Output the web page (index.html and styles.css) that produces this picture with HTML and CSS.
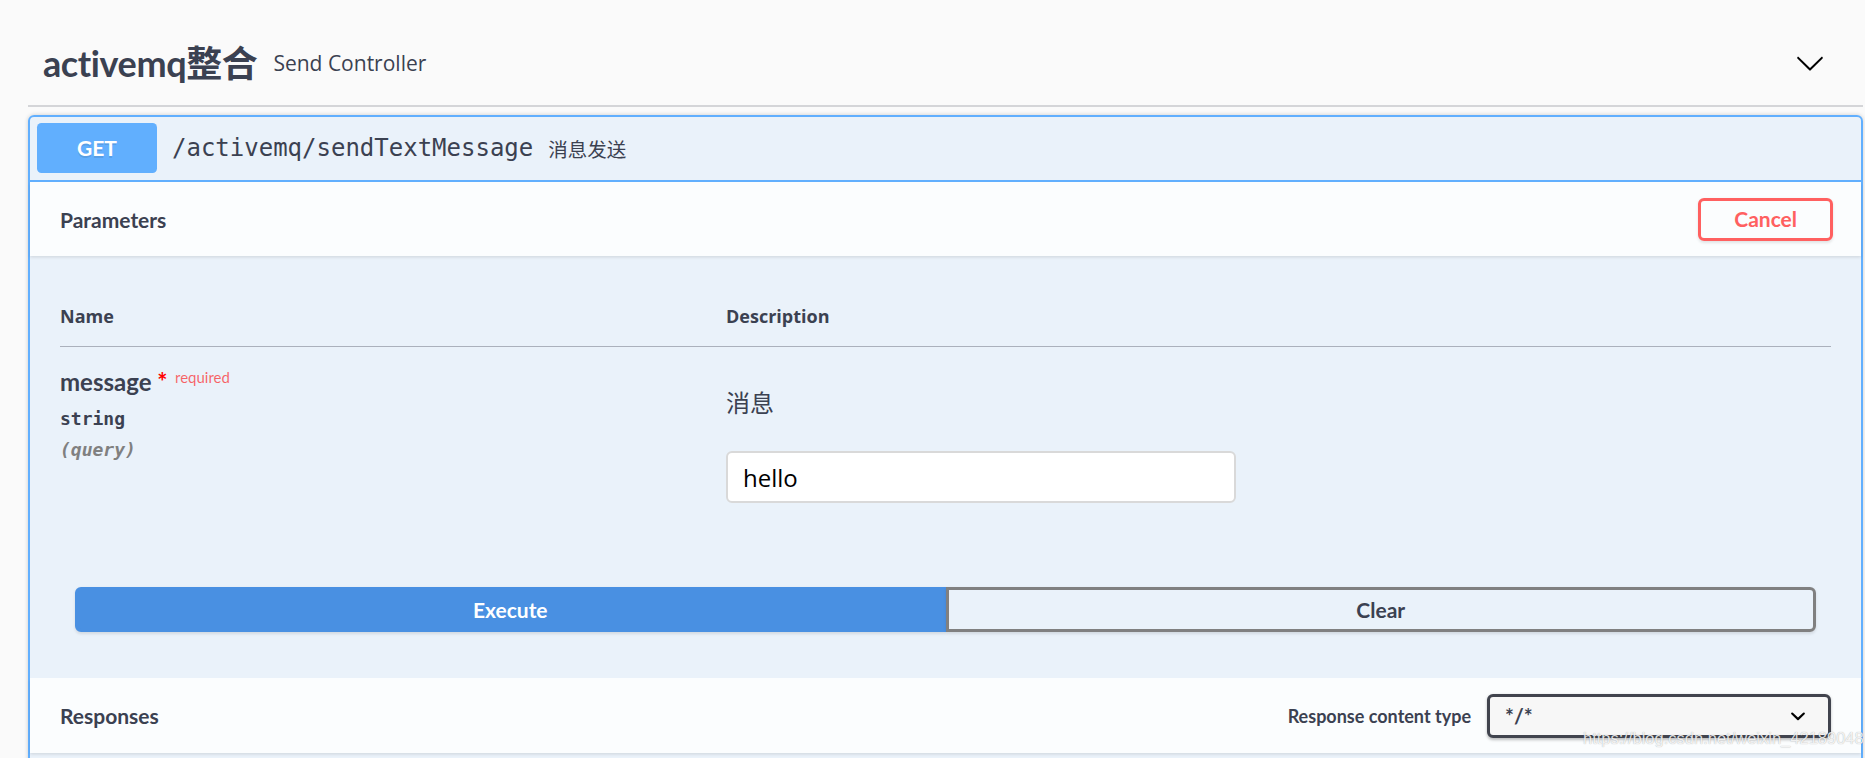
FILE: index.html
```html
<!DOCTYPE html>
<html lang="zh">
<head>
<meta charset="utf-8">
<title>activemq整合</title>
<link rel="stylesheet" href="styles.css">
</head>
<body>
<div class="page">
  <div class="tag-section">
    <h4 class="tag">
      <span class="tag-name">activemq整合</span>
      <small class="tag-desc">Send Controller</small>
      <svg class="arrow" width="30" height="30" viewBox="0 0 20 20" aria-hidden="true"><path d="M17.418 6.109c.272-.268.709-.268.979 0s.271.701 0 .969l-7.908 7.83c-.27.268-.707.268-.979 0l-7.908-7.83c-.27-.268-.27-.701 0-.969.271-.268.709-.268.979 0L10 13.25l7.418-7.141z"/></svg>
    </h4>
    <div class="opblock">
      <div class="summary">
        <span class="method">GET</span>
        <span class="path">/activemq/sendTextMessage</span>
        <span class="summary-desc">消息发送</span>
      </div>
      <div class="section-header">
        <h4 class="section-title">Parameters</h4>
        <button class="btn cancel">Cancel</button>
      </div>
      <div class="table-container">
        <table class="parameters">
          <thead>
            <tr><th class="col-name">Name</th><th class="col-desc">Description</th></tr>
          </thead>
          <tbody>
            <tr>
              <td class="col-name">
                <div class="param-name">message<span class="star">&nbsp;*</span><span class="required">required</span></div>
                <div class="param-type">string</div>
                <div class="param-in">(query)</div>
              </td>
              <td class="col-desc">
                <p class="param-desc">消息</p>
                <input class="param-input" type="text" value="hello">
              </td>
            </tr>
          </tbody>
        </table>
      </div>
      <div class="btn-group">
        <button class="btn execute">Execute</button>
        <button class="btn clear">Clear</button>
      </div>
      <div class="section-header responses-header">
        <h4 class="section-title">Responses</h4>
        <label class="media-type">
          <span class="media-label">Response content type</span>
          <span class="select"><span>*/*</span><svg width="30" height="30" viewBox="0 0 20 20" aria-hidden="true"><path d="M13.418 7.859a.695.695 0 01.978 0 .68.68 0 010 .969l-3.908 3.83a.697.697 0 01-.979 0l-3.908-3.830a.68.68 0 010-.969.695.695 0 01.978 0L10 11z"/></svg></span>
        </label>
      </div>
      <div class="responses-body"></div>
    </div>
  </div>
  <div class="watermark">https://blog.csdn.net/weixin_42189048</div>
</div>
</body>
</html>
```
FILE: styles.css
```css
html, body {
  margin: 0;
  padding: 0;
  background: #fafafa;
  height: 758px;
  overflow: hidden;
}

.page {
  position: relative;
  padding: 21px 0 0 28px;
  color: #3b4151;
  font-family: Lato, "Noto Sans CJK SC", sans-serif;
}

.tag-section {
  width: 1835px;
}

.tag {
  display: flex;
  align-items: center;
  margin: 0 0 8px;
  padding: 15px 38px 15px 15px;
  border-bottom: 2px solid rgba(59, 65, 81, 0.2);
  font-weight: 700;
}

.tag-name {
  font-family: Lato, "Noto Sans CJK SC", sans-serif;
  font-size: 36px;
  line-height: 54px;
  font-weight: 700;
  letter-spacing: -0.4px;
  color: #3b4151;
}

.tag-desc {
  flex: 1;
  padding: 0 16px;
  font-family: "Open Sans", "Noto Sans CJK SC", sans-serif;
  font-size: 21px;
  font-weight: 400;
  color: #3b4151;
}

.arrow {
  fill: #000;
  flex: none;
}

.opblock {
  border: 2px solid #61affe;
  border-radius: 6px;
  background: rgba(97, 175, 254, 0.1);
  box-shadow: 0 0 4.5px rgba(0, 0, 0, 0.19);
}

.summary {
  display: flex;
  align-items: center;
  padding: 6px 7px 7px;
  border-bottom: 2px solid #61affe;
}

.method {
  min-width: 120px;
  box-sizing: border-box;
  padding: 9px 22px;
  line-height: 32px;
  text-align: center;
  border-radius: 4.5px;
  background: #61affe;
  color: #fff;
  font-size: 21px;
  font-weight: 700;
  text-shadow: 0 1.5px 0 rgba(0, 0, 0, 0.1);
}

.path {
  padding: 0 15px;
  font-family: "DejaVu Sans Mono", monospace;
  font-size: 24px;
  color: #3b4151;
}

.summary-desc {
  flex: 1;
  font-family: "Open Sans", "Noto Sans CJK SC", sans-serif;
  font-size: 19.5px;
  color: #3b4151;
}

.section-header {
  display: flex;
  align-items: center;
  box-sizing: border-box;
  min-height: 74px;
  padding: 12px 28px 12px 30px;
  background: rgba(255, 255, 255, 0.8);
  box-shadow: 0 1.5px 3px rgba(0, 0, 0, 0.1);
}

.section-title {
  flex: 1;
  margin: 0;
  font-size: 21px;
  font-weight: 700;
  color: #3b4151;
}

.btn {
  font-family: Lato, sans-serif;
  font-size: 21px;
  font-weight: 700;
  line-height: 22px;
  padding: 7.5px 34.5px;
  border: 3px solid #808080;
  border-radius: 6px;
  background: transparent;
  box-shadow: 0 1.5px 3px rgba(0, 0, 0, 0.1);
  color: #3b4151;
}

.cancel {
  padding: 7.5px 33px;
  border-color: #ff6060;
  color: #ff6060;
}

.table-container {
  padding: 30px;
}

.parameters {
  width: 100%;
  border-collapse: collapse;
}

.parameters th {
  padding: 18px 0;
  text-align: left;
  font-family: "Open Sans", sans-serif;
  font-size: 18px;
  line-height: 24px;
  font-weight: 700;
  color: #3b4151;
  border-bottom: 1px solid rgba(59, 65, 81, 0.2);
}

.parameters td {
  padding: 13px 0 0;
  vertical-align: top;
}

.col-name {
  width: 666px;
}

.param-name {
  padding-top: 4px;
  font-size: 24px;
  line-height: 36px;
  font-weight: 700;
  color: #3b4151;
}

.star {
  color: #f00;
}

.required {
  position: relative;
  top: -9px;
  padding: 7.5px;
  font-size: 15px;
  font-weight: 400;
  color: rgba(255, 0, 0, 0.6);
}

.param-type {
  padding: 4px 0 7px;
  font-family: "DejaVu Sans Mono", monospace;
  font-size: 18px;
  line-height: 24px;
  font-weight: 700;
  color: #3b4151;
}

.param-in {
  font-family: "DejaVu Sans Mono", monospace;
  font-size: 18px;
  line-height: 24px;
  font-style: italic;
  font-weight: 700;
  color: #808080;
}

.param-desc {
  margin: 24px 0 31px;
  font-family: "Noto Sans CJK SC", sans-serif;
  font-size: 24px;
  line-height: 36px;
  color: #3b4151;
}

.param-input {
  display: block;
  box-sizing: border-box;
  width: 510px;
  height: 52px;
  margin: 0 0 9px;
  padding: 0 15px;
  border: 2px solid #d9d9d9;
  border-radius: 6px;
  background: #fff;
  font-family: "Open Sans", sans-serif;
  font-size: 24px;
  color: #000;
}

.btn-group {
  display: flex;
  padding: 45px 45px 46px;
}

.btn-group .btn {
  flex: 1;
  line-height: 24px;
  padding: 7.5px 15px;
}

.execute {
  background: #4990e2;
  border-color: #4990e2;
  color: #fff;
  border-radius: 6px 0 0 6px;
}

.clear {
  border-radius: 0 6px 6px 0;
}

.responses-header {
  min-height: 75px;
  padding-right: 30px;
}

.media-type {
  display: flex;
  align-items: center;
  gap: 16px;
}

.media-label {
  font-size: 18px;
  font-weight: 700;
  color: #3b4151;
}

.select {
  display: flex;
  align-items: center;
  justify-content: space-between;
  box-sizing: border-box;
  width: 344px;
  height: 44px;
  padding: 0 15px;
  border: 3px solid #41444e;
  border-radius: 6px;
  background: #f7f7f7;
  box-shadow: 0 1.5px 3px rgba(0, 0, 0, 0.25);
  font-size: 21px;
  font-weight: 700;
  color: #3b4151;
}

.select svg {
  fill: #000;
}

.responses-body {
  height: 120px;
}

.watermark {
  position: absolute;
  left: 1583px;
  top: 729px;
  font-family: "Liberation Sans", Arial, sans-serif;
  font-size: 16.5px;
  color: rgba(255, 255, 255, 0.85);
  text-shadow: 0 0 1px rgba(0, 0, 0, 0.35);
  white-space: nowrap;
}
```
